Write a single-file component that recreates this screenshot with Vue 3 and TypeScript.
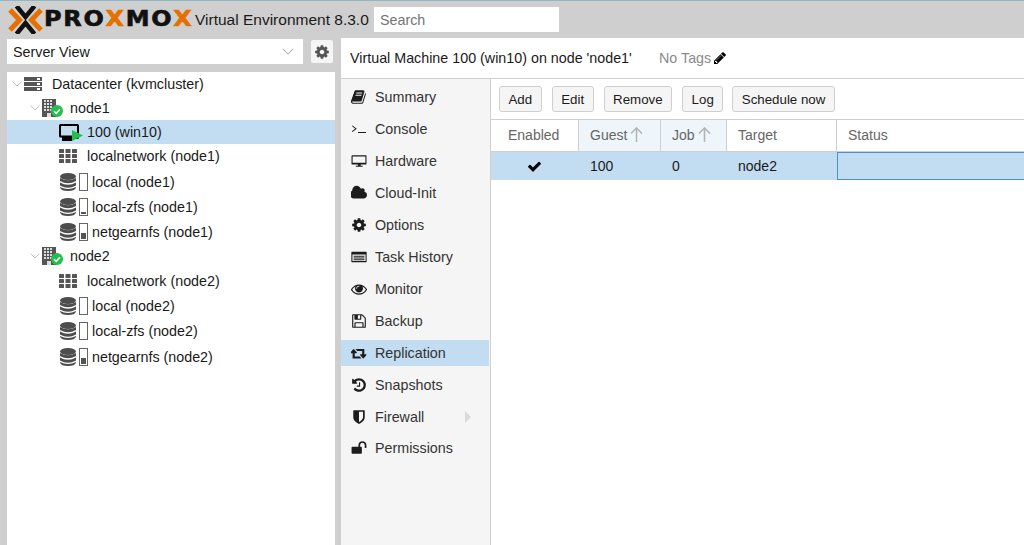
<script setup lang="ts">
interface TreeRow {
  label: string
  kind: 'dc' | 'node' | 'vm' | 'net' | 'store'
  tall?: boolean
  nudge?: 'up' | 'down'
  used?: number
  selected?: boolean
}

interface MenuItem {
  label: string
  d?: string
  w?: number
  arrow?: boolean
  selected?: boolean
}

const treeRows: TreeRow[] = [
  { label: 'Datacenter (kvmcluster)', kind: 'dc' },
  { label: 'node1', kind: 'node' },
  { label: '100 (win10)', kind: 'vm', selected: true },
  { label: 'localnetwork (node1)', kind: 'net', tall: true, nudge: 'up' },
  { label: 'local (node1)', kind: 'store', tall: true, used: 0 },
  { label: 'local-zfs (node1)', kind: 'store', tall: true, used: 2 },
  { label: 'netgearnfs (node1)', kind: 'store', tall: true, used: 6 },
  { label: 'node2', kind: 'node' },
  { label: 'localnetwork (node2)', kind: 'net', tall: true },
  { label: 'local (node2)', kind: 'store', tall: true, used: 0 },
  { label: 'local-zfs (node2)', kind: 'store', tall: true, used: 0 },
  { label: 'netgearnfs (node2)', kind: 'store', tall: true, used: 6, nudge: 'down' },
]

const windows: number[][] = []
for (let y = 1; y < 12; y += 3) {
  for (let x = 2; x < 11; x += 3) {
    windows.push([x, y])
  }
}

const cog = 'M1152 896q0-106-75-181t-181-75-181 75-75 181 75 181 181 75 181-75 75-181zm512-109v222q0 12-8 23t-20 13l-185 28q-19 54-39 91 35 50 107 138 10 12 10 25t-9 23q-27 37-99 108t-94 71q-12 0-26-9l-138-108q-44 23-91 38-16 136-29 186-7 28-36 28h-222q-14 0-24.5-8.5t-11.5-21.5l-28-184q-49-16-90-37l-141 107q-10 9-25 9-14 0-25-11-126-114-165-168-7-10-7-23 0-12 8-23 15-21 51-66.5t54-70.5q-27-50-41-99l-183-27q-13-2-21-12.5t-8-23.5v-222q0-12 8-23t19-13l186-28q14-46 39-92-40-57-107-138-10-12-10-24 0-10 9-23 26-36 98.5-107.5t94.5-71.5q13 0 26 10l138 107q44-23 91-38 16-136 29-186 7-28 36-28h222q14 0 24.5 8.5t11.5 21.5l28 184q49 16 90 37l142-107q9-9 24-9 13 0 25 10 129 119 165 170 7 8 7 22 0 12-8 23-15 21-51 66.5t-54 70.5q26 50 41 98l183 28q13 2 21 12.5t8 23.5z'
const check = 'M1671 566q0 40-28 68l-724 724-136 136q-28 28-68 28t-68-28l-136-136-362-362q-28-28-28-68t28-68l136-136q28-28 68-28t68 28l294 295 656-657q28-28 68-28t68 28l136 136q28 28 28 68z'
const pencil = 'M491 1536l91-91-235-235-91 91v107h128v128h107zm523-928q0-22-22-22-10 0-17 7l-542 542q-7 7-7 17 0 22 22 22 10 0 17-7l542-542q7-7 7-17zm-54-192l416 416-832 832h-416v-416zm683 96q0 53-37 90l-166 166-416-416 166-165q36-38 90-38 53 0 91 38l235 234q37 39 37 91z'

const menu: MenuItem[] = [
  { label: 'Summary', d: 'M1639 478q40 57 18 129l-275 906q-19 64-76.5 107.5t-122.5 43.5h-923q-77 0-148.5-53.5t-99.5-131.5q-24-67-2-127 0-4 3-27t4-37q1-8-3-21.5t-3-19.5q2-11 8-21t16.5-23.5 16.5-23.5q23-38 45-91.5t30-91.5q3-10 .5-30t-.5-28q3-11 17-28t17-23q21-36 42-92t25-90q1-9-2.5-32t.5-28q4-13 22-30.5t22-22.5q19-26 42.5-84.5t27.5-96.5q1-8-3-25.5t-2-26.5q2-8 9-18t18-23 17-21q8-12 16.5-30.5t15-35 16-36 19.5-32 26.5-23.5 36-11.5 47.5 5.5l-1 3q38-9 51-9h761q74 0 114 56t18 130l-274 906q-36 119-71.5 153.5t-128.5 34.5h-869q-27 0-38 15-11 16-1 43 24 70 144 70h923q29 0 56-15.5t35-41.5l300-987q7-22 5-57 38 15 59 43zm-1064 2q-4 13 2 22.5t20 9.5h608q13 0 25.5-9.5t16.5-22.5l21-64q4-13-2-22.5t-20-9.5h-608q-13 0-25.5 9.5t-16.5 22.5zm-83 256q-4 13 2 22.5t20 9.5h608q13 0 25.5-9.5t16.5-22.5l21-64q4-13-2-22.5t-20-9.5h-608q-13 0-25.5 9.5t-16.5 22.5z' },
  { label: 'Console', d: 'M100 560l70-70 470 370-470 370-70-70 360-300zM780 1240h900v110h-900z' },
  { label: 'Hardware', d: 'M130 256h1532q72 0 72 72v896q0 72-72 72h-574v128h222v112h-768v-112h222v-128h-634q-72 0-72-72v-896q0-72 72-72zm50 128v704h1432v-704z' },
  { label: 'Cloud-Init', d: 'M1792 1120q0 159-112.5 271.5t-271.5 112.5h-1088q-185 0-316.5-131.5t-131.5-316.500q0-132 71-241.500t187-163.500q-2-28-2-43 0-212 150-362t362-150q158 0 286.500 88t187.500 230q70-62 166-62 106 0 181 75t75 181q0 75-41 138 129 30 213 134.500t84 239.500z' },
  { label: 'Options', d: cog },
  { label: 'Task History', d: 'M100 320h1592q60 0 60 60v1032q0 60-60 60h-1592q-60 0-60-60v-1032q0-60 60-60zm60 300v712h1472v-712zm130 130h1212v110h-1212zm0 200h1212v110h-1212zm0 200h1212v110h-1212z' },
  { label: 'Monitor', d: 'M1664 960q-152-236-381-353 61 104 61 225 0 185-131.5 316.5t-316.5 131.5-316.5-131.5-131.5-316.5q0-121 61-225-229 117-381 353 133 205 333.5 326.5t434.5 121.5 434.5-121.5 333.5-326.5zm-720-384q0-20-14-34t-34-14q-125 0-214.5 89.5t-89.5 214.5q0 20 14 34t34 14 34-14 14-34q0-86 61-147t147-61q20 0 34-14t14-34zm848 384q0 34-20 69-140 230-376.5 368.5t-499.5 138.5-499.5-139-376.5-368q-20-35-20-69t20-69q140-229 376.5-368t499.5-139 499.5 139 376.5 368q20 35 20 69z' },
  { label: 'Backup', d: 'M512 1536h768v-384h-768v384zm896 0h128v-896q0-14-10-38.5t-20-34.5l-281-281q-10-10-34-20t-39-10v416q0 40-28 68t-68 28h-576q-40 0-68-28t-28-68v-416h-128v1280h128v-416q0-40 28-68t68-28h832q40 0 68 28t28 68v416zm-384-928v-320q0-13-9.5-22.5t-22.5-9.5h-192q-13 0-22.5 9.5t-9.5 22.5v320q0 13 9.5 22.5t22.5 9.5h192q13 0 22.5-9.5t9.5-22.5zm640 32v928q0 40-28 68t-68 28h-1344q-40 0-68-28t-28-68v-1344q0-40 28-68t68-28h928q40 0 88 20t76 48l280 280q28 28 48 76t20 88z' },
  { label: 'Replication', w: 1920, selected: true, d: 'M1216 1528q0 13-9.5 22.5t-22.5 9.5h-960q-8 0-13.5-2t-9-7-5.5-8-3-11.5-1-11.5v-600h-192q-26 0-45-19t-19-45q0-24 15-41l320-384q19-22 49-22t49 22l320 384q15 17 15 41 0 26-19 45t-45 19h-192v384h576q16 0 25 11l160 192q7 10 7 21zm640-416q0 24-15 41l-320 384q-20 23-49 23t-49-23l-320-384q-15-17-15-41 0-26 19-45t45-19h192v-384h-576q-16 0-25-12l-160-192q-7-9-7-20 0-13 9.5-22.5t22.5-9.5h960q8 0 13.5 2t9 7 5.5 8 3 11.5 1 11.5v600h192q26 0 45 19t19 45z' },
  { label: 'Snapshots', d: 'M1664 896q0 156-61 298t-164 245-245 164-298 61q-172 0-327-72.5t-264-204.5q-7-10-6.5-22.5t8.5-20.5l137-138q10-9 25-9 16 2 23 12 73 95 179 147t225 52q104 0 198.5-40.5t163.5-109.5 109.5-163.5 40.5-198.5-40.5-198.5-109.5-163.5-163.5-109.5-198.5-40.5q-98 0-188 35.5t-160 101.5l137 138q31 30 14 69-17 40-59 40h-448q-26 0-45-19t-19-45v-448q0-42 40-59 39-17 69 14l130 129q107-101 244.5-156.5t284.5-55.5q156 0 298 61t245 164 164 245 61 298zm-640-288v448q0 14-9 23t-23 9h-320q-14 0-23-9t-9-23v-64q0-14 9-23t23-9h224v-352q0-14 9-23t23-9h64q14 0 23 9t9 23z' },
  { label: 'Firewall', arrow: true, d: 'M1344 960v-640h-448v1137q119-63 213-137 235-184 235-360zm192-768v768q0 86-33.5 170.5t-83 150-118 127.5-126.5 103-121 77.5-89.5 49.5-42.5 20q-12 6-26 6t-26-6q-16-7-42.5-20t-89.5-49.5-121-77.5-126.5-103-118-127.5-83-150-33.5-170.5v-768q0-26 19-45t45-19h1152q26 0 45 19t19 45z' },
  { label: 'Permissions', d: 'M1728 576v256q0 26-19 45t-45 19h-64q-26 0-45-19t-19-45v-256q0-106-75-181t-181-75-181 75-75 181v192h96q40 0 68 28t28 68v576q0 40-28 68t-68 28h-960q-40 0-68-28t-28-68v-576q0-40 28-68t68-28h672v-192q0-185 131.5-316.5t316.5-131.5 316.5 131.5 131.5 316.5z' },
]

const buttons = ['Add', 'Edit', 'Remove', 'Log', 'Schedule now']

const columns = [
  { label: 'Enabled', width: 88 },
  { label: 'Guest', width: 82, sorted: true },
  { label: 'Job', width: 66, sorted: true },
  { label: 'Target', width: 110 },
  { label: 'Status', width: 188 },
]
</script>

<template>
  <div class="app">
    <header class="topbar">
      <div class="logo">
        <svg class="logo__mark" viewBox="0 0 35 28">
          <path d="M2 4l9.500 10L2 24M33 4l-9.500 10L33 24" fill="none" stroke="#e57000" stroke-width="5" />
          <path d="M8.500 0l9 11 9-11M8.500 28l9-11 9 11" fill="none" stroke="#111" stroke-width="4.500" />
        </svg>
        <span class="logo__text">PRO<b>X</b>MO<b>X</b></span>
      </div>
      <span class="version">Virtual Environment 8.3.0</span>
      <div class="search">Search</div>
    </header>

    <main class="main">
      <aside class="left">
        <div class="view-bar">
          <div class="combo">
            <span>Server View</span>
            <svg class="combo__chevron" viewBox="0 0 14 8"><path d="M1 1l6 6 6-6" /></svg>
          </div>
          <button class="gear" type="button">
            <svg viewBox="0 0 1792 1792"><path :d="cog" /></svg>
          </button>
        </div>

        <ul class="tree">
          <li
            v-for="row in treeRows"
            :key="row.label"
            class="tree__row"
            :class="[
              `tree__row--${row.kind}`,
              row.nudge ? `tree__row--${row.nudge}` : '',
              { 'tree__row--tall': row.tall, 'is-selected': row.selected },
            ]"
          >
            <svg v-if="row.kind === 'dc' || row.kind === 'node'" class="tree__chevron" viewBox="0 0 10 6">
              <path d="M.5.5L5 5 9.500.5" />
            </svg>

            <svg v-if="row.kind === 'dc'" class="ico-dc" viewBox="0 0 18 14">
              <g v-for="y in [0, 5, 10]" :key="y">
                <rect x="0" :y="y" width="18" height="4" fill="#555" />
                <rect x="13" :y="y + 1" width="3" height="2" fill="#fff" />
              </g>
            </svg>

            <span v-else-if="row.kind === 'node'" class="ico-node">
              <svg class="ico-node__building" viewBox="0 0 14 18">
                <rect width="14" height="18" fill="#555" />
                <rect v-for="w in windows" :key="w.join()" :x="w[0]" :y="w[1]" width="2" height="2" fill="#ddd" />
                <rect x="5" y="14" width="4" height="4" fill="#ddd" />
              </svg>
              <svg class="ico-node__status" viewBox="0 0 12 12">
                <circle cx="6" cy="6" r="6" fill="#21bf4b" />
                <path d="M3 6.200l2.200 2.200L9 4.200" fill="none" stroke="#fff" stroke-width="1.600" />
              </svg>
            </span>

            <span v-else-if="row.kind === 'vm'" class="ico-vm">
              <svg class="ico-vm__screen" viewBox="0 0 20 17">
                <path d="M1.500 0h17q1.500 0 1.500 1.500v12q0 1.500-1.500 1.500H13v2H3v-3.500H1.500Q0 13.500 0 12v-10.500Q0 0 1.500 0zM2 2v9.500h16V2z" fill="#000" fill-rule="evenodd" />
              </svg>
              <svg class="ico-vm__play" viewBox="0 0 11 11"><path d="M0 0l11 5.500L0 11z" fill="#21bf4b" /></svg>
            </span>

            <svg v-else-if="row.kind === 'net'" class="ico-net" viewBox="0 0 18 14">
              <g v-for="y in [0, 5, 10]" :key="y">
                <rect v-for="x in [0, 6.500, 13]" :key="x" :x="x" :y="y" width="5" height="4" rx="0.500" fill="#555" />
              </g>
            </svg>

            <span v-else class="ico-store">
              <svg class="ico-store__db" viewBox="0 0 16 18">
                <ellipse cx="8" cy="3.500" rx="8" ry="3.500" fill="#4d4d4d" />
                <path d="M0 5Q8 9.500 16 5V8Q8 12.500 0 8zM0 9.500Q8 14 16 9.500v3Q8 17 0 12.500zM0 14Q8 18 16 14v.5q-1 3.500-8 3.500t-8-3.500z" fill="#4d4d4d" />
              </svg>
              <span class="ico-store__bar"><i :style="{ height: `${row.used}px` }" /></span>
            </span>

            <span class="tree__label">{{ row.label }}</span>
          </li>
        </ul>
      </aside>

      <section class="content">
        <div class="title-bar">
          <span class="title-bar__name">Virtual Machine 100 (win10) on node 'node1'</span>
          <span class="title-bar__tags">No Tags</span>
          <svg class="title-bar__pencil" viewBox="0 0 1792 1792"><path :d="pencil" /></svg>
        </div>

        <div class="panel">
          <nav class="menu">
            <a
              v-for="item in menu"
              :key="item.label"
              class="menu__item"
              :class="{ 'is-selected': item.selected }"
            >
              <svg class="menu__icon" :viewBox="`0 0 ${item.w ?? 1792} 1792`"><path :d="item.d" /></svg>
              <span>{{ item.label }}</span>
              <i v-if="item.arrow" class="menu__arrow" />
            </a>
          </nav>

          <div class="grid-panel">
            <div class="toolbar">
              <button v-for="b in buttons" :key="b" class="btn" type="button">{{ b }}</button>
            </div>

            <div class="grid-head">
              <div
                v-for="col in columns"
                :key="col.label"
                class="grid-head__cell"
                :class="{ 'is-sorted': col.sorted }"
                :style="{ width: `${col.width}px` }"
              >
                {{ col.label }}
                <svg v-if="col.sorted" class="grid-head__sort" viewBox="0 0 13 15">
                  <path d="M6.500 15V1M1 6.500l5.500-5.500 5.500 5.500" />
                </svg>
              </div>
            </div>

            <div class="grid-row">
              <div class="grid-row__cell grid-row__cell--center" style="width: 88px">
                <svg class="grid-row__check" viewBox="0 0 1792 1792"><path :d="check" /></svg>
              </div>
              <div class="grid-row__cell" style="width: 82px">100</div>
              <div class="grid-row__cell" style="width: 66px">0</div>
              <div class="grid-row__cell" style="width: 110px">node2</div>
              <div class="grid-row__cell grid-row__cell--focus" />
            </div>
          </div>
        </div>
      </section>
    </main>
  </div>
</template>

<style>
html,
body {
  margin: 0;
  background: #cfcfcf;
  overflow: hidden;
}
</style>

<style scoped>
.app {
  width: 1024px;
  height: 545px;
  display: flex;
  flex-direction: column;
  overflow: hidden;
  background: #cfcfcf;
  color: #1a1a1a;
  font-family: "Liberation Sans", Arial, sans-serif;
  font-size: 14px;
}

.topbar {
  height: 37px;
  flex-shrink: 0;
  display: flex;
  align-items: center;
  border-top: 1px solid #8fb9c2;
  box-sizing: content-box;
}

.logo {
  display: flex;
  align-items: center;
  margin-left: 8px;
  width: 187px;
}

.logo__mark {
  width: 35px;
  height: 28px;
  flex-shrink: 0;
}

.logo__text {
  display: inline-block;
  margin-left: 1px;
  font-family: "DejaVu Sans", sans-serif;
  font-weight: 700;
  font-size: 21px;
  letter-spacing: 1.5px;
  line-height: 1;
  color: #111;
  -webkit-text-stroke: 0.6px currentColor;
  transform: scaleX(1.14);
  transform-origin: left center;
}

.logo__text b {
  color: #e57000;
}

.version {
  width: 179px;
  font-size: 15.5px;
  white-space: nowrap;
}

.search {
  width: 185px;
  height: 25px;
  padding-left: 6px;
  box-sizing: border-box;
  background: #fff;
  color: #757575;
  font-size: 14.3px;
  line-height: 26px;
}

.main {
  flex: 1;
  display: flex;
  gap: 6px;
  min-height: 0;
}

.left {
  width: 328px;
  margin-left: 7px;
  display: flex;
  flex-direction: column;
  gap: 8px;
  padding-top: 1px;
}

.view-bar {
  display: flex;
  gap: 7px;
  height: 25px;
}

.combo {
  width: 296px;
  display: flex;
  align-items: center;
  justify-content: space-between;
  padding: 0 6px;
  box-sizing: border-box;
  background: #fff;
  font-size: 14.3px;
}

.combo__chevron {
  width: 12px;
  height: 7px;
  margin-right: 3px;
  fill: none;
  stroke: #b5b5b5;
  stroke-width: 1.3;
}

.gear {
  width: 24px;
  padding: 0;
  display: grid;
  place-items: center;
  background: #f5f5f5;
  border: 1px solid #cfcfcf;
  border-radius: 3px;
}

.gear svg {
  width: 16px;
  height: 16px;
  fill: #555;
}

.tree {
  flex: 1;
  margin: 0;
  padding: 0;
  list-style: none;
  background: #fff;
  font-size: 14.3px;
}

.tree__row {
  height: 24px;
  box-sizing: border-box;
  display: flex;
  align-items: center;
  white-space: nowrap;
}

.tree__row--tall {
  height: 25px;
}

.tree__row--up {
  padding-bottom: 2px;
}

.tree__row--down {
  padding-top: 2px;
}

.tree__row.is-selected {
  background: #c2ddf2;
}

.tree__chevron {
  width: 10px;
  height: 6px;
  fill: none;
  stroke: #c4c4c4;
}

.tree__row--dc {
  padding-left: 5px;
}

.tree__row--node {
  padding-left: 23px;
}

.tree__row--vm,
.tree__row--net,
.tree__row--store {
  padding-left: 52px;
}

.ico-dc {
  width: 18px;
  height: 14px;
  margin: 0 10px 0 2px;
  flex-shrink: 0;
}

.ico-node {
  position: relative;
  width: 21px;
  height: 18px;
  margin: 0 7px 0 2px;
  flex-shrink: 0;
}

.ico-node__building {
  display: block;
  width: 14px;
  height: 18px;
}

.ico-node__status {
  position: absolute;
  left: 9px;
  top: 6px;
  width: 12px;
  height: 12px;
}

.ico-vm {
  position: relative;
  width: 24px;
  height: 17px;
  margin: 0 4px 0 0;
  flex-shrink: 0;
}

.ico-vm__screen {
  display: block;
  width: 20px;
  height: 17px;
}

.ico-vm__play {
  position: absolute;
  left: 13px;
  top: 6px;
  width: 11px;
  height: 11px;
}

.ico-net {
  width: 18px;
  height: 14px;
  margin-right: 10px;
  flex-shrink: 0;
}

.ico-store {
  display: flex;
  align-items: center;
  gap: 3px;
  margin-left: 1px;
  margin-right: 4px;
}

.ico-store__db {
  width: 16px;
  height: 18px;
}

.ico-store__bar {
  width: 9px;
  height: 18px;
  box-sizing: border-box;
  border: 1px solid #666;
  display: flex;
  align-items: flex-end;
  padding: 1px;
  background: #fff;
}

.ico-store__bar i {
  display: block;
  width: 100%;
  background: #555;
}

.content {
  flex: 1;
  display: flex;
  flex-direction: column;
  min-width: 0;
  background: #fff;
}

.title-bar {
  height: 41px;
  flex-shrink: 0;
  display: flex;
  align-items: center;
  padding-left: 9px;
  box-sizing: border-box;
  border-bottom: 1px solid #cfcfcf;
  font-size: 14.3px;
}

.title-bar__name {
  width: 309px;
  white-space: nowrap;
}

.title-bar__tags {
  color: #8a8a8a;
  margin-right: 2px;
}

.title-bar__pencil {
  width: 14px;
  height: 14px;
}

.panel {
  flex: 1;
  display: flex;
  min-height: 0;
}

.menu {
  width: 150px;
  flex-shrink: 0;
  box-sizing: border-box;
  padding: 5px 1px 0 0;
  display: flex;
  flex-direction: column;
  gap: 6px;
  background: #f5f5f5;
  border-right: 1px solid #cfcfcf;
  font-size: 14.3px;
}

.menu__item {
  position: relative;
  height: 26px;
  flex-shrink: 0;
  display: flex;
  align-items: center;
  padding-left: 10px;
  color: #333;
}

.menu__item:last-child {
  margin-top: -1px;
}

.menu__item.is-selected {
  background: #c2ddf2;
}

.menu__icon {
  width: 16px;
  height: 16px;
  margin-right: 8px;
  fill: #1c1c1c;
  flex-shrink: 0;
}

.menu__arrow {
  position: absolute;
  left: 124px;
  top: 7px;
  border-left: 6px solid #dadada;
  border-top: 6px solid transparent;
  border-bottom: 6px solid transparent;
}

.grid-panel {
  flex: 1;
  min-width: 0;
}

.toolbar {
  height: 41px;
  box-sizing: border-box;
  display: flex;
  align-items: center;
  gap: 10px;
  padding-left: 8px;
  border-bottom: 1px solid #cfcfcf;
}

.btn {
  height: 26px;
  padding: 0 8.5px;
  background: #f5f5f5;
  border: 1px solid #cfcfcf;
  border-radius: 3px;
  font: inherit;
  font-size: 13.3px;
  color: #1a1a1a;
}

.btn:last-child {
  margin-left: -1px;
}

.grid-head {
  display: flex;
  height: 32px;
  box-sizing: border-box;
  border-bottom: 1px solid #cfcfcf;
}

.grid-head__cell {
  flex-shrink: 0;
  box-sizing: border-box;
  display: flex;
  align-items: center;
  padding-left: 11px;
  padding-bottom: 2px;
  border-right: 1px solid #cfcfcf;
  color: #666;
}

.grid-head__cell:first-child {
  padding-left: 17px;
}

.grid-head__cell.is-sorted {
  background: #eef5fb;
}

.grid-head__sort {
  width: 13px;
  height: 15px;
  margin-left: 3px;
  fill: none;
  stroke: #b3b3b3;
  stroke-width: 1.5;
}

.grid-row {
  display: flex;
  height: 28px;
  background: #c2ddf2;
}

.grid-row__cell {
  flex-shrink: 0;
  box-sizing: border-box;
  display: flex;
  align-items: center;
  padding-left: 11px;
}

.grid-row__cell--center {
  justify-content: center;
  padding: 0 2px 0 0;
}

.grid-row__cell--focus {
  flex: 1;
  border: 1px solid #4a90d0;
  border-right: none;
}

.grid-row__check {
  width: 15px;
  height: 15px;
}
</style>
